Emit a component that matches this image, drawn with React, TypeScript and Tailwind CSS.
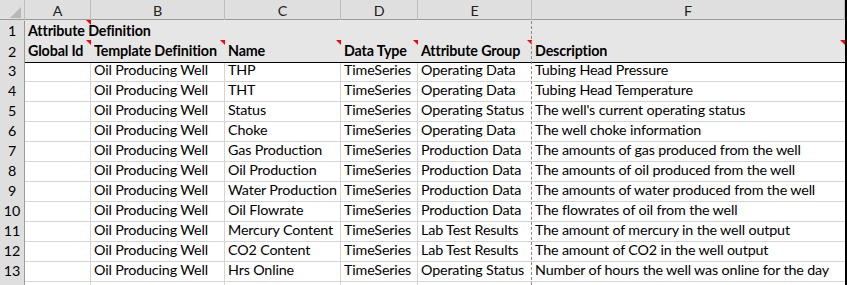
import React from "react";

const cols = ["A", "B", "C", "D", "E", "F"];

const rows: string[][] = [
    ["", "Oil Producing Well", "THP", "TimeSeries", "Operating Data", "Tubing Head Pressure"],
    ["", "Oil Producing Well", "THT", "TimeSeries", "Operating Data", "Tubing Head Temperature"],
    ["", "Oil Producing Well", "Status", "TimeSeries", "Operating Status", "The well's current operating status"],
    ["", "Oil Producing Well", "Choke", "TimeSeries", "Operating Data", "The well choke information"],
    ["", "Oil Producing Well", "Gas Production", "TimeSeries", "Production Data", "The amounts of gas produced from the well"],
    ["", "Oil Producing Well", "Oil Production", "TimeSeries", "Production Data", "The amounts of oil produced from the well"],
    ["", "Oil Producing Well", "Water Production", "TimeSeries", "Production Data", "The amounts of water produced from the well"],
    ["", "Oil Producing Well", "Oil Flowrate", "TimeSeries", "Production Data", "The flowrates of oil from the well"],
    ["", "Oil Producing Well", "Mercury Content", "TimeSeries", "Lab Test Results", "The amount of mercury in the well output"],
    ["", "Oil Producing Well", "CO2 Content", "TimeSeries", "Lab Test Results", "The amount of CO2 in the well output"],
    ["", "Oil Producing Well", "Hrs Online", "TimeSeries", "Operating Status", "Number of hours the well was online for the day"],
    ["", "", "", "", "", ""],
];

const headers = ["Global Id", "Template Definition", "Name", "Data Type", "Attribute Group", "Description"];

const Note = () => (
    <span className="absolute top-0 right-0 w-0 h-0 border-t-[5px] border-l-[5px] border-t-[#ff0000] border-l-transparent" />
);

const grid = "grid grid-cols-[25px_66px_134px_116px_77px_114px_313px]";

export default function App() {
    return (
        <div
            className="relative w-[847px] h-[285px] overflow-hidden bg-white text-[14.3px] tracking-[-0.15px] text-black border-r-2 border-black"
            style={{ fontFamily: "Lato, 'Liberation Sans', sans-serif" }}
        >
            {/* column letters */}
            <div className={`${grid} h-[20px] bg-[#dfdfdf] border-b border-[#9b9b9b]`}>
                <div className="relative border-r border-[#bdbdbd]">
                    <span className="absolute bottom-[3px] right-[3px] w-0 h-0 border-b-[11px] border-l-[11px] border-b-[#b8b8b8] border-l-transparent" />
                </div>
                {cols.map((c) => (
                    <div key={c} className="flex items-center justify-center border-r border-[#bdbdbd] text-[#222]">
                        {c}
                    </div>
                ))}
            </div>

            {/* row 1 */}
            <div className={`${grid} h-[20px]`}>
                <div className="flex items-center justify-center bg-[#dfdfdf] border-r border-b border-[#9b9b9b] border-b-[#cfcfcf]">1</div>
                <div className="relative col-span-6 bg-[#e7e6e6] flex items-end pl-[3px] pb-[1px] font-bold whitespace-nowrap">
                    Attribute Definition
                    <span className="absolute top-0 left-[61px] w-0 h-0 border-t-[5px] border-l-[5px] border-t-[#ff0000] border-l-transparent" />
                </div>
            </div>

            {/* row 2 */}
            <div className={`${grid} h-[20px]`}>
                <div className="flex items-center justify-center bg-[#dfdfdf] border-r border-b border-[#9b9b9b] border-b-[#cfcfcf]">2</div>
                {headers.map((h) => (
                    <div
                        key={h}
                        className="relative bg-[#e7e6e6] border-b border-black flex items-end pl-[3px] pb-[1px] font-bold whitespace-nowrap"
                    >
                        {h}
                        <Note />
                    </div>
                ))}
            </div>

            {/* data rows */}
            {rows.map((r, ri) => (
                <div key={ri} className={`${grid} h-[20px]`}>
                    <div className="flex items-center justify-center bg-[#dfdfdf] border-r border-b border-[#9b9b9b] border-b-[#cfcfcf]">
                        {ri < 11 ? ri + 3 : ""}
                    </div>
                    {r.map((v, ci) => (
                        <div
                            key={ci}
                            className={`flex items-end pl-[3px] pb-[1px] whitespace-nowrap overflow-hidden border-b border-[#d4d4d4] ${ci < 4 ? "border-r" : ""}`}
                        >
                            {v}
                        </div>
                    ))}
                </div>
            ))}

            {/* page break marker between E and F */}
            <div className="absolute left-[531px] top-[21px] bottom-0 border-l border-dashed border-[#8a8a8a] pointer-events-none" />
        </div>
    );
}
